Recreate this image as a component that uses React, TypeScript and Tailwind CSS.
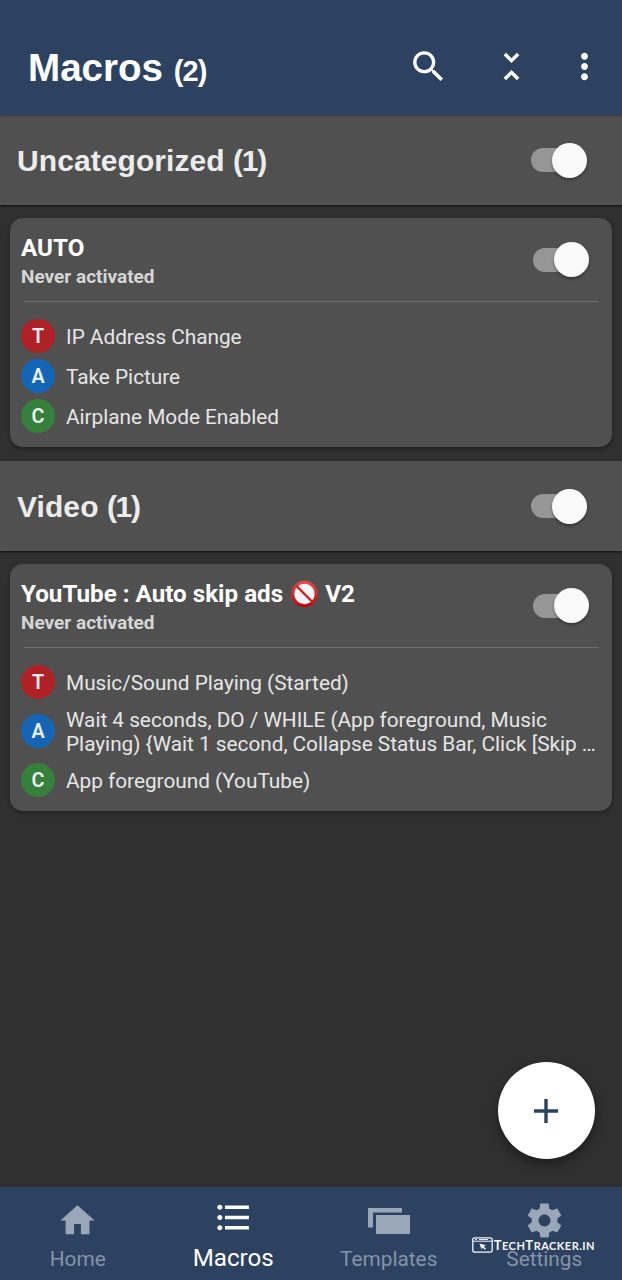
import type { ReactNode } from 'react';

function Icon({ d, className }: { d: string; className: string }) {
  return (
    <svg viewBox="0 0 24 24" fill="currentColor" className={className} aria-hidden="true">
      <path d={d} />
    </svg>
  );
}

const PATHS = {
  search:
    'M15.5 14h-.79l-.28-.27A6.471 6.471 0 0 0 16 9.5 6.5 6.5 0 1 0 9.5 16c1.61 0 3.09-.59 4.23-1.57l.27.28v.79l5 4.99L20.49 19l-4.99-5zm-6 0C7.01 14 5 11.99 5 9.5S7.01 5 9.5 5 14 7.01 14 9.5 11.99 14 9.5 14z',
  collapse:
    'M7.41 18.59L8.83 20 12 16.83 15.17 20l1.41-1.41L12 14l-4.59 4.59zm9.18-13.18L15.17 4 12 7.17 8.83 4 7.41 5.41 12 10l4.59-4.59z',
  more: 'M12 8c1.1 0 2-.9 2-2s-.9-2-2-2-2 .9-2 2 .9 2 2 2zm0 2c-1.1 0-2 .9-2 2s.9 2 2 2 2-.9 2-2-.9-2-2-2zm0 6c-1.1 0-2 .9-2 2s.9 2 2 2 2-.9 2-2-.9-2-2-2z',
  home: 'M10 20v-6h4v6h5v-8h3L12 3 2 12h3v8z',
  list: 'M4 10.5c-.83 0-1.5.67-1.5 1.5s.67 1.5 1.5 1.5 1.5-.67 1.5-1.5-.67-1.5-1.5-1.5zm0-6c-.83 0-1.5.67-1.5 1.5S3.17 7.5 4 7.5 5.5 6.83 5.5 6 4.83 4.5 4 4.5zm0 12c-.83 0-1.5.68-1.5 1.5s.68 1.5 1.5 1.5 1.5-.68 1.5-1.5-.67-1.5-1.5-1.5zM7 19h14v-2H7v2zm0-6h14v-2H7v2zm0-8v2h14V5H7z',
  settings:
    'M19.43 12.98c.04-.32.07-.64.07-.98s-.03-.66-.07-.98l2.11-1.65c.19-.15.24-.42.12-.64l-2-3.46c-.12-.22-.39-.3-.61-.22l-2.49 1c-.52-.4-1.08-.73-1.69-.98l-.38-2.65C14.46 2.18 14.25 2 14 2h-4c-.25 0-.46.18-.49.42l-.38 2.65c-.61.25-1.17.59-1.69.98l-2.49-1c-.23-.09-.49 0-.61.22l-2 3.46c-.13.22-.07.49.12.64l2.11 1.65c-.04.32-.07.65-.07.98s.03.66.07.98l-2.11 1.65c-.19.15-.24.42-.12.64l2 3.46c.12.22.39.3.61.22l2.49-1c.52.4 1.08.73 1.69.98l.38 2.65c.03.24.24.42.49.42h4c.25 0 .46-.18.49-.42l.38-2.65c.61-.25 1.17-.59 1.69-.98l2.49 1c.23.09.49 0 .61-.22l2-3.46c.12-.22.07-.49-.12-.64l-2.11-1.65zM12 15.5c-1.93 0-3.5-1.57-3.5-3.5s1.57-3.5 3.5-3.5 3.5 1.57 3.5 3.5-1.57 3.5-3.5 3.5z',
};

function Toggle() {
  return (
    <div className="flex h-[35px] w-[56px] shrink-0 items-center rounded-full">
      <div className="flex h-6 w-[50px] items-center rounded-full bg-[#969696]">
        <div className="ml-[21px] size-[35px] shrink-0 rounded-full bg-[#fafafa] shadow-[0_2px_3px_rgba(0,0,0,0.35)]" />
      </div>
    </div>
  );
}

function Category({ name, count }: { name: string; count: number }) {
  return (
    <div className="flex h-[90px] items-center justify-between bg-[#505050] pr-[35px] pl-[17px] shadow-[0_1px_2px_rgba(0,0,0,0.75)]">
      <h2 className="pt-0.5 text-[30px] leading-none font-bold whitespace-nowrap text-[#ececec]">
        <span className="tracking-[0.08px]">{name}</span> <span className="tracking-[-1.3px]">({count})</span>
      </h2>
      <Toggle />
    </div>
  );
}

const BADGES = { T: 'bg-[#b02125]', A: 'bg-[#1565b6]', C: 'bg-[#35803b]' };

function Row({ kind, tall, children }: { kind: keyof typeof BADGES; tall?: boolean; children: ReactNode }) {
  return (
    <li className={tall ? 'flex h-[58px] items-center' : 'flex h-10 items-center'}>
      <span
        className={`flex size-[34px] shrink-0 items-center justify-center rounded-full pt-px text-[19.8px] leading-none font-semibold text-[#e8eef2] ${BADGES[kind]}`}
      >
        {kind}
      </span>
      <span className="ml-[11px] pt-[2px] text-[20.8px] leading-[24.4px] tracking-[-0.02px] whitespace-nowrap text-[#e6e6e6]">
        {children}
      </span>
    </li>
  );
}

function MacroCard({ title, children }: { title: ReactNode; children: ReactNode }) {
  return (
    <article className="mx-[10px] rounded-[13px] bg-[#505050] pb-[11px] font-[Roboto,sans-serif] shadow-[0_2px_4px_rgba(0,0,0,0.35)]">
      <header className="flex h-[83px] justify-between pr-[23px] pl-[11px]">
        <div className="pt-4">
          <h3 className="flex h-7 items-center text-[24.2px] leading-7 font-bold whitespace-nowrap text-white">{title}</h3>
          <p className="mt-[3px] text-[19px] leading-6 font-bold text-[#d6d6d6]">Never activated</p>
        </div>
        <div className="pt-[24px]">
          <Toggle />
        </div>
      </header>
      <div className="mr-[14px] ml-[14px] h-px bg-[#6d6d6d]" />
      <ul className="pt-[14px] pl-[11px]">{children}</ul>
    </article>
  );
}

function Prohibited() {
  return (
    <svg viewBox="0 0 28 28" className="mx-[7px] size-7" role="img" aria-label="Prohibited">
      <defs>
        <linearGradient id="ring" x1="0" y1="0" x2="0" y2="1">
          <stop offset="0" stopColor="#e8484c" />
          <stop offset="1" stopColor="#c0080e" />
        </linearGradient>
      </defs>
      <circle cx="14.500" cy="14" r="11.7" fill="#f6f6f6" stroke="url(#ring)" strokeWidth="3" />
      <path d="M6.500 6l16 16" stroke="#cf1d22" strokeWidth="2.4" />
    </svg>
  );
}

function Tab({ icon, label, active }: { icon: ReactNode; label: string; active?: boolean }) {
  return (
    <div className={active ? 'flex flex-1 flex-col items-center text-white' : 'flex flex-1 flex-col items-center text-[#9aa7b8]'}>
      <div className={active ? 'h-[58px] pt-[10px]' : 'h-[60px] pt-[13px]'}>{icon}</div>
      <span className={active ? 'text-[24.2px] leading-[27px]' : 'text-[20.8px] leading-6 text-[#8493a8]'}>{label}</span>
    </div>
  );
}

export default function App() {
  return (
    <div className="relative flex h-[1280px] w-[622px] flex-col overflow-hidden bg-[#303030] font-['Liberation_Sans',Arial,sans-serif]">
      <header className="z-10 flex h-[115px] shrink-0 items-center bg-[#2c4260] pt-[18px] pr-[17px] pl-[28px] text-white shadow-[0_1px_2px_rgba(0,0,0,0.3)]">
        <h1 className="flex-1 pt-[3px] text-[38.6px] leading-none font-bold whitespace-nowrap">
          Macros <span className="text-[29px] tracking-[-0.9px]">(2)</span>
        </h1>
        <Icon d={PATHS.search} className="mr-[42px] size-[41px]" />
        <Icon d={PATHS.collapse} className="mr-[32px] size-[41px]" />
        <Icon d={PATHS.more} className="size-[41px]" />
      </header>

      <main className="flex-1">
        <Category name="Uncategorized" count={1} />
        <div className="h-[13px]" />
        <MacroCard title="AUTO">
          <Row kind="T">IP Address Change</Row>
          <Row kind="A">Take Picture</Row>
          <Row kind="C">Airplane Mode Enabled</Row>
        </MacroCard>
        <div className="h-[14px]" />
        <Category name="Video" count={1} />
        <div className="h-[13px]" />
        <MacroCard
          title={
            <>
              YouTube : Auto skip ads
              <Prohibited />
              V2
            </>
          }
        >
          <Row kind="T">Music/Sound Playing (Started)</Row>
          <Row kind="A" tall>
            Wait 4 seconds, DO / WHILE (App foreground, Music
            <br />
            Playing) &#123;Wait 1 second, Collapse Status Bar, Click [Skip …
          </Row>
          <Row kind="C">App foreground (YouTube)</Row>
        </MacroCard>
      </main>

      <button
        aria-label="Add macro"
        className="absolute right-[27.5px] bottom-[121px] flex size-[97px] items-center justify-center rounded-full bg-white text-[#2c4260] shadow-[0_5px_12px_rgba(0,0,0,0.4)]"
      >
        <svg viewBox="0 0 24 24" className="size-6" fill="none" stroke="currentColor" strokeWidth="3.4">
          <path d="M12 0v24M0 12h24" />
        </svg>
      </button>

      <nav className="flex h-[93px] shrink-0 bg-[#2c4260] font-[Roboto,sans-serif]">
        <Tab icon={<Icon d={PATHS.home} className="size-[41px]" />} label="Home" />
        <Tab icon={<Icon d={PATHS.list} className="size-[41px]" />} label="Macros" active />
        <Tab
          icon={
            <svg viewBox="0 0 42 41" fill="currentColor" className="h-[41px] w-[42px]">
              <path d="M0 8h34v4.500H5V27.500H0z" />
              <path d="M8 15h34v19H8z" />
            </svg>
          }
          label="Templates"
        />
        <Tab icon={<Icon d={PATHS.settings} className="size-[41px]" />} label="Settings" />
      </nav>

      <div className="absolute right-[27px] bottom-[26px] flex items-center gap-[1px] text-[#f4f7fa]">
        <svg viewBox="0 0 21 16" className="h-4 w-[21px]" fill="none" stroke="currentColor">
          <rect x="0.800" y="0.800" width="19.400" height="14.400" rx="1.800" strokeWidth="1.300" />
          <path d="M1 4.200h19" strokeWidth="1" />
          <path d="M3 2.500h2M7 2.500h9" strokeWidth="0.900" />
          <path d="M7.500 6.500l6.500 1.800-2.200 1.200 2.200 2.300-1.300 1-2.100-2.300-1.200 1.800z" fill="currentColor" stroke="none" />
        </svg>
        <span className="pt-px font-[Lato,sans-serif] text-[11px] leading-4 font-bold tracking-[0.48px]">
          <span className="text-[13px]">T</span>ECH<span className="text-[13px]">T</span>RACKER.IN
        </span>
      </div>
    </div>
  );
}
